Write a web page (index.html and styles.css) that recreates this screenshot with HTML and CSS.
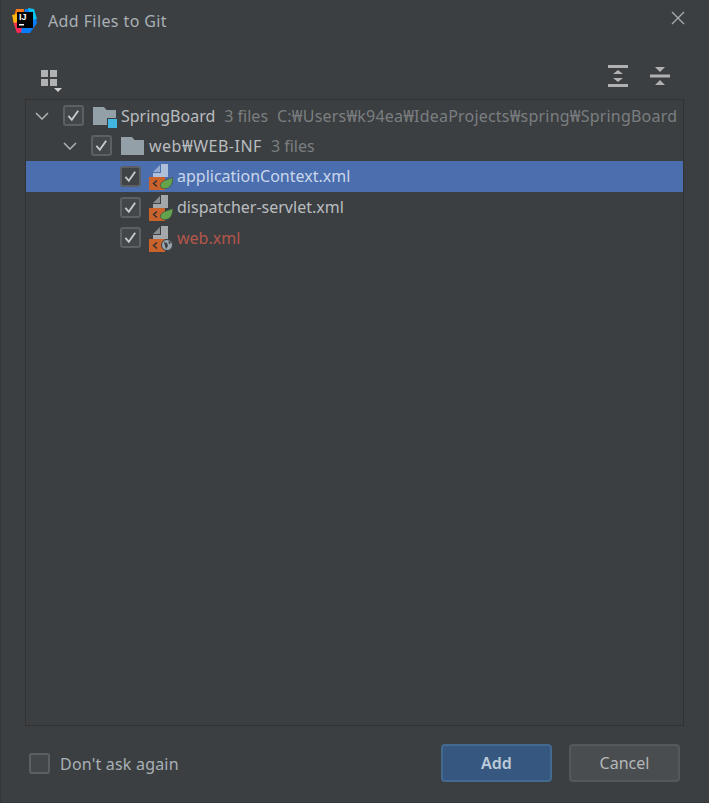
FILE: index.html

```html
<!DOCTYPE html>
<html lang="en">
<head>
  <meta charset="UTF-8" />
  <title>Add Files to Git</title>
  <link rel="stylesheet" href="styles.css">
</head>
<body>
  <svg class="defs" width="0" height="0">
    <symbol id="xml-file" viewBox="0 0 24 26">
      <path d="M4 8 11 1v7z" fill="currentColor" opacity=".75"/>
      <path d="M12 0h7v13H4V9h8z" fill="currentColor"/>
      <rect x="0" y="13" width="16" height="13" fill="#c9622b"/>
      <path d="M8 16.500 4.500 19.500 8 22.500" fill="none" stroke="#2f2f2f" stroke-width="1.400"/>
    </symbol>
    <symbol id="leaf" viewBox="0 0 13 12">
      <path d="M12.700 .4C13.200 7 10 11.700 5 11.700 2.200 11.700 .5 10.500 .2 8.800 .6 3.800 6.500 3 12.700 .4z" fill="#62a34c" stroke="#3c3f41" stroke-width=".6"/>
    </symbol>
    <symbol id="folder" viewBox="0 0 23 18">
      <path d="M0 0h11l2.500 3H23v15H0z" fill="#93a0a8"/>
    </symbol>
    <symbol id="check" viewBox="0 0 20 20">
      <path d="M4 10.500 8 15 15.500 4.500" fill="none" stroke="#c8cacb" stroke-width="2.200"/>
    </symbol>
  </svg>

  <div class="dialog">
    <header class="title-bar">
      <svg class="logo" width="25" height="26" viewBox="0 0 25 26">
        <path d="M4 1 12 1 10 20 5 24 1 13z" fill="#f97a12"/>
        <path d="M0 7 5 6 6 14 2 15z" fill="#fdb60d"/>
        <path d="M2 15 13 13 13 24 5 25z" fill="#fe2857"/>
        <path d="M13 1 22 1 25 15 18 25 9 25z" fill="#087cfa"/>
        <path d="M16 0 22 1 25 11 20 12z" fill="#07c3f2"/>
        <rect x="5" y="4" width="16" height="16" fill="#000"/>
        <rect x="7" y="16" width="5" height="1.500" fill="#fff"/>
        <text x="7" y="12" class="logo-text">IJ</text>
      </svg>
      <span class="title">Add Files to Git</span>
      <svg class="close" width="14" height="14" viewBox="0 0 14 14">
        <path d="M1 1 13 13M13 1 1 13" stroke="#a9acae" stroke-width="1.300"/>
      </svg>
    </header>

    <div class="toolbar">
      <svg width="24" height="26" viewBox="0 0 24 26">
        <path d="M0 2h7v7H0zM9 2h7v7H9zM0 11h7v7H0zM9 11h7v7H9z" fill="#afb1b3"/>
        <path d="M13 20h8l-4 4z" fill="#d0d0d0"/>
      </svg>
      <div class="toolbar-right">
        <svg width="20" height="22" viewBox="0 0 20 22">
          <path d="M0 0h20v3H0zM0 19h20v3H0zM10 5l5 4H5zM10 17l-5-4h10z" fill="#afb1b3"/>
        </svg>
        <svg width="20" height="20" viewBox="0 0 20 20">
          <path d="M0 8.500h20v3H0zM5 1h10l-5 5zM10 14l5 5H5z" fill="#afb1b3"/>
        </svg>
      </div>
    </div>

    <div class="tree">
      <div class="row depth-0">
        <svg class="chevron" viewBox="0 0 14 8"><path d="M1 1l6 6 6-6" fill="none" stroke="#afb1b3" stroke-width="1.500"/></svg>
        <span class="checkbox"><svg><use href="#check"/></svg></span>
        <span class="node-icon dir">
          <svg width="23" height="18"><use href="#folder"/></svg>
          <i class="module-badge"></i>
        </span>
        <span class="name">SpringBoard</span>
        <span class="meta">3 files</span>
        <span class="meta path">C:₩Users₩k94ea₩IdeaProjects₩spring₩SpringBoard</span>
      </div>
      <div class="row depth-1">
        <svg class="chevron" viewBox="0 0 14 8"><path d="M1 1l6 6 6-6" fill="none" stroke="#afb1b3" stroke-width="1.500"/></svg>
        <span class="checkbox"><svg><use href="#check"/></svg></span>
        <span class="node-icon dir">
          <svg width="23" height="18"><use href="#folder"/></svg>
        </span>
        <span class="name wide">web₩WEB-INF</span>
        <span class="meta">3 files</span>
      </div>
      <div class="row depth-2 selected">
        <span class="checkbox"><svg><use href="#check"/></svg></span>
        <span class="node-icon file">
          <svg width="24" height="26"><use href="#xml-file"/></svg>
          <svg class="overlay" width="13" height="12"><use href="#leaf"/></svg>
        </span>
        <span class="name">applicationContext.xml</span>
      </div>
      <div class="row depth-2">
        <span class="checkbox"><svg><use href="#check"/></svg></span>
        <span class="node-icon file">
          <svg width="24" height="26"><use href="#xml-file"/></svg>
          <svg class="overlay" width="13" height="12"><use href="#leaf"/></svg>
        </span>
        <span class="name">dispatcher-servlet.xml</span>
      </div>
      <div class="row depth-2">
        <span class="checkbox"><svg><use href="#check"/></svg></span>
        <span class="node-icon file">
          <svg width="24" height="26"><use href="#xml-file"/></svg>
          <svg class="overlay" width="12" height="12" viewBox="0 0 12 12">
            <circle cx="6" cy="6" r="5.500" fill="#9aa7b0" stroke="#3c3f41"/>
            <path d="M3 3l3 1 1 3-2 3-1-3zM7.500 1.500l2.500 2-2 2z" fill="#3c3f41"/>
          </svg>
        </span>
        <span class="name unversioned">web.xml</span>
      </div>
    </div>

    <footer class="actions">
      <label class="dont-ask">
        <span class="checkbox empty"></span>
        <span>Don't ask again</span>
      </label>
      <div class="buttons">
        <button class="btn primary">Add</button>
        <button class="btn">Cancel</button>
      </div>
    </footer>
  </div>
</body>
</html>
```

FILE: styles.css

```css
html, body {
  margin: 0;
  padding: 0;
  height: 100%;
}
body {
  background: #3c3f41;
  color: #bbbbbb;
  font-family: "Noto Sans", "Open Sans", sans-serif;
  font-size: 16px;
  overflow: hidden;
}
.defs {
  position: absolute;
}
.dialog {
  height: 803px;
  box-sizing: border-box;
  display: flex;
  flex-direction: column;
  padding: 0 25px 0 24px;
  border-left: 1px solid #333537;
  border-bottom: 1px solid #333537;
}
.title-bar {
  height: 42px;
  display: flex;
  align-items: center;
  margin-left: -13px;
}
.logo {
  margin-right: 11px;
}
.logo-text {
  fill: #fff;
  font-family: "Liberation Sans", sans-serif;
  font-size: 9px;
  font-weight: bold;
}
.title {
  font-size: 16px;
  letter-spacing: 0.4px;
  color: #a9b0b6;
}
.close {
  margin-left: auto;
  margin-right: -1px;
  margin-top: -7px;
}
.toolbar {
  height: 57px;
  display: flex;
  align-items: flex-start;
  justify-content: space-between;
  padding: 26px 14px 0 16px;
  box-sizing: border-box;
}
.toolbar-right {
  display: flex;
  gap: 22px;
  align-items: center;
  margin-top: -3px;
}
.tree {
  flex: 1;
  border: 1px solid #323232;
  min-height: 0;
}
.row {
  height: 30.6px;
  display: flex;
  align-items: center;
  white-space: nowrap;
  position: relative;
  color: #b9bdc0;
}
.depth-0 {
  padding-left: 9px;
  padding-top: 1px;
  height: 29.6px;
}
.depth-1 {
  padding-left: 37px;
}
.depth-2 {
  padding-left: 94px;
}
.selected {
  background: #4b6eaf;
}
.selected .name {
  color: #c9d6ea;
}
.chevron {
  width: 14px;
  height: 8px;
  margin-right: 14px;
}
.checkbox {
  width: 21px;
  height: 21px;
  box-sizing: border-box;
  border: 2px solid #5d6062;
  border-radius: 3px;
  background: #43474a;
  display: inline-block;
  flex: none;
  margin-right: 8px;
}
.selected .checkbox {
  border-color: #5c6066;
  background: #3f4346;
}
.checkbox svg {
  width: 17px;
  height: 17px;
  display: block;
}
.node-icon {
  position: relative;
  width: 24px;
  height: 26px;
  display: flex;
  align-items: center;
  margin-right: 4px;
  flex: none;
}
.dir {
  margin-left: 1px;
}
.file {
  color: #a4a8ab;
  top: 1px;
}
.selected .file {
  color: #aebfd9;
}
.overlay {
  position: absolute;
  right: 0;
  bottom: 1px;
}
.module-badge {
  position: absolute;
  right: -1px;
  bottom: 0;
  width: 11px;
  height: 11px;
  background: #40b6e0;
  border: 1px solid #3c3f41;
  box-sizing: border-box;
}
.wide {
  letter-spacing: 0.5px;
}
.meta {
  color: #7a7e80;
  margin-left: 9px;
}
.path {
  letter-spacing: 0.2px;
}
.unversioned {
  color: #b5564b;
}
.actions {
  height: 76px;
  display: flex;
  align-items: center;
  justify-content: space-between;
  flex: none;
  padding: 0 4px 2px 0;
  box-sizing: border-box;
}
.dont-ask {
  display: flex;
  align-items: center;
  margin-left: 4px;
  padding-top: 1px;
  color: #a9b0b6;
  letter-spacing: 0.2px;
}
.dont-ask .checkbox {
  margin-right: 10px;
}
.buttons {
  display: flex;
  gap: 17px;
}
.btn {
  width: 111px;
  height: 38px;
  border: 2px solid #55585a;
  border-radius: 4px;
  background: #4a4d4f;
  color: #b4b7b9;
  font-family: inherit;
  font-size: 16px;
}
.primary {
  background: #365880;
  border-color: #43698f;
  color: #bccbd9;
  font-weight: 600;
}
```
